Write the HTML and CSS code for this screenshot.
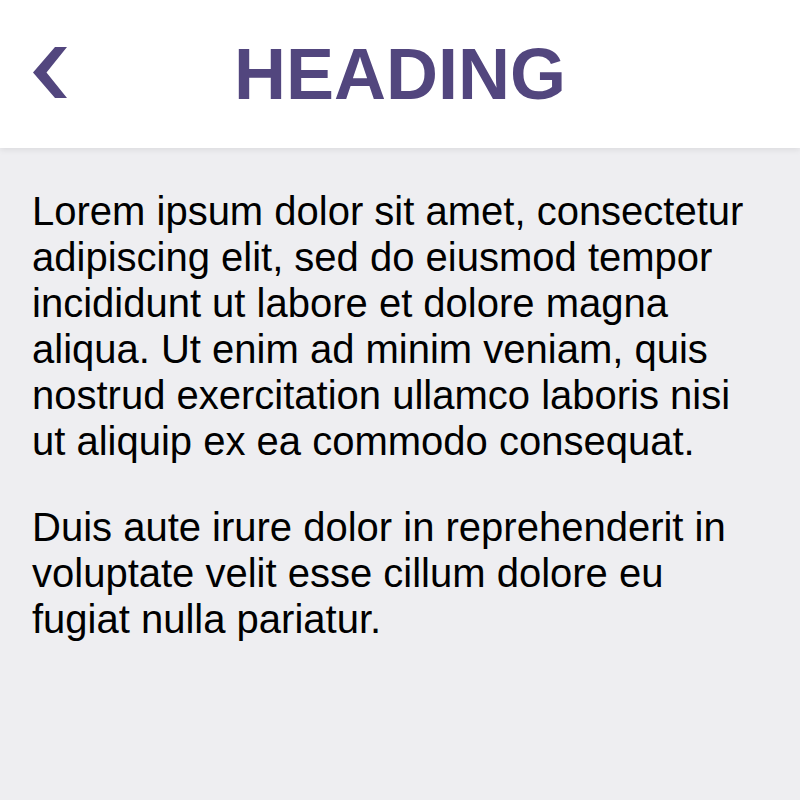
FILE: index.html
```html
<!DOCTYPE html>
<html>
<head>
<meta charset="utf-8">
<link rel="stylesheet" href="styles.css">
</head>
<body>
<header class="topbar">
  <div class="topbar-left">
    <svg class="back-icon" width="40" height="56" viewBox="0 0 40 56" aria-hidden="true">
      <polygon points="25,1 37,1 16.5,26.5 37,52 25,52 3,26.5" fill="#52467e"/>
    </svg>
  </div>
  <h1 class="title">HEADING</h1>
  <div class="topbar-right"></div>
</header>
<main class="content">
  <p>Lorem ipsum dolor sit amet, consectetur adipiscing elit, sed do eiusmod tempor incididunt ut labore et dolore magna aliqua. Ut enim ad minim veniam, quis nostrud exercitation ullamco laboris nisi ut aliquip ex ea commodo consequat.</p>
  <p>Duis aute irure dolor in reprehenderit in voluptate velit esse cillum dolore eu fugiat nulla pariatur.</p>
</main>
</body>
</html>
```

FILE: styles.css
```css
html, body {
  margin: 0;
  padding: 0;
}
body {
  background: #eeeef1;
  font-family: "Liberation Sans", Arial, Helvetica, sans-serif;
  width: 800px;
  height: 800px;
  overflow: hidden;
}
.topbar {
  display: grid;
  grid-template-columns: 1fr auto 1fr;
  align-items: center;
  height: 148px;
  background: #ffffff;
  box-shadow: 0 2px 6px rgba(0, 0, 0, 0.08);
}
.topbar-left {
  display: flex;
  align-items: center;
  padding-left: 30px;
}
.back-icon {
  display: block;
}
.title {
  margin: 0;
  font-size: 72px;
  font-weight: 700;
  color: #52467e;
  line-height: 83px;
}
.content {
  padding: 40px 32px;
}
.content p {
  margin: 0 0 40px 0;
  font-size: 40px;
  line-height: 46px;
  color: #000000;
}
```
